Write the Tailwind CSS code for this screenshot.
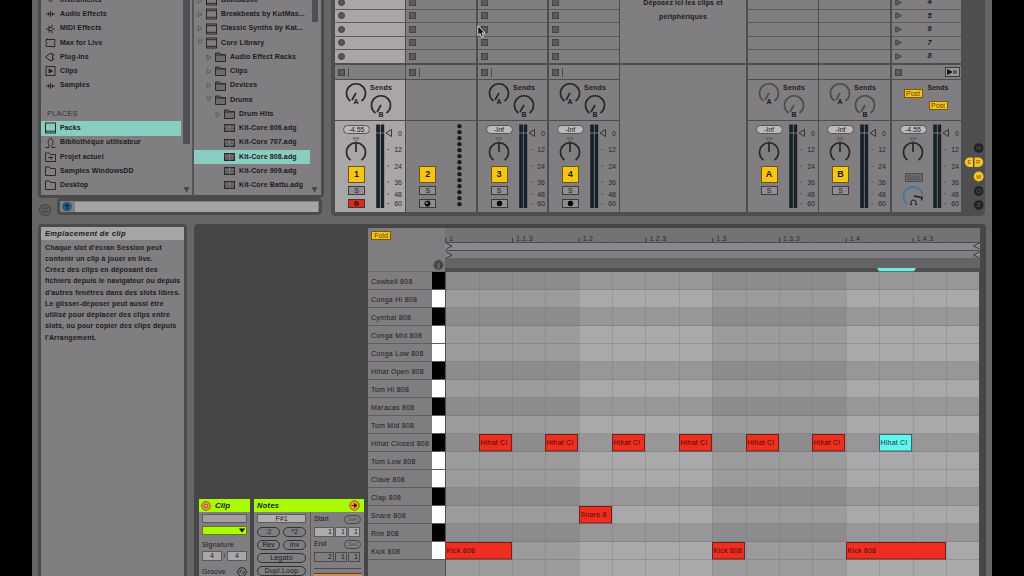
<!DOCTYPE html>
<html lang="fr">
<head>
    <meta charset="UTF-8">
    <meta name="viewport" content="width=device-width, initial-scale=1.0">
    <title>Session - Kit-Core 808</title>
    <script src="https://cdn.jsdelivr.net/npm/@tailwindcss/browser@4"></script>
    <style>
        body { font-family: 'Liberation Sans', Arial, sans-serif; }
        svg text { font-family: 'Liberation Sans', Arial, sans-serif; }
    </style>
</head>
<body class="bg-black w-[1024px] h-[576px] overflow-hidden">
    <div class="ml-8 w-[960px] h-[576px] bg-[#676667] overflow-hidden text-[#1c1a1c]">
        <div class="flex h-[224px]">
            <!-- Navigateur -->
            <div class="w-[299px] shrink-0 pl-1.5">
                <div class="w-[286px] h-[198px] bg-[#807e81] border-x-[3px] border-b-[3px] border-[#4c4b4c] rounded-b-sm flex overflow-hidden">
                    <div id="categories" class="w-[142px] h-[198px] -mt-[7px] shrink-0"></div>
                    <div class="w-[7px] h-[195px] shrink-0 flex flex-col items-center justify-between">
                        <div class="w-[7px] h-[144px] bg-[#4f4e54]"></div>
                        <svg class="w-[7px] h-[9px]" viewBox="0 0 7 9"><path d="M0.5 1h6L3.5 7z" fill="#4a494b"/></svg>
                    </div>
                    <div class="w-0.5 ml-0.5 h-[195px] bg-[#555456] shrink-0"></div>
                    <div id="files" class="w-[116px] h-[210px] -mt-[7px] shrink-0"></div>
                    <div class="w-[9px] h-[195px] shrink-0 flex flex-col items-center justify-between">
                        <div class="w-[6px] h-[22px] bg-[#4f4e54]"></div>
                        <svg class="w-[7px] h-[9px]" viewBox="0 0 7 9"><path d="M0.5 1h6L3.5 7z" fill="#4a494b"/></svg>
                    </div>
                </div>
                <div class="flex items-start">
                    <svg class="w-[18px] h-[20px] shrink-0" viewBox="0 0 18 20"><circle cx="7" cy="12" r="6.300" fill="#4d4c4d"/><circle cx="7" cy="12" r="4" fill="none" stroke="#6c6b6c"/><path d="M4 12h6" stroke="#6c6b6c"/></svg>
                    <div class="ml-px w-[265px] h-[17px] rounded-sm bg-[#807e81] border-[3px] border-[#4c4b4c] flex items-center">
                        <svg class="w-[13px] h-[11px] shrink-0" viewBox="0 0 13 11"><circle cx="7" cy="5.500" r="4.800" fill="#1e5d84"/><path d="M7 8.500V3M4.800 4.500h4.400" stroke="#0c2c44" stroke-width="1.300"/></svg>
                        <div class="ml-0.5 w-[243px] h-2.5 bg-[#a5a3a5]"></div>
                    </div>
                </div>
            </div>
            <!-- Session -->
            <div class="w-[654px] h-[216px] bg-[#4e4d4f] rounded-b pl-1 flex">
                <div id="tracks" class="flex h-[212px] shrink-0"></div>
                <svg class="w-[23px] h-[216px] shrink-0" viewBox="1 0 23 216">
                    <g fill="#222123"><circle cx="17.700" cy="148" r="4.800"/><circle cx="17.700" cy="191" r="4.800"/><circle cx="17.700" cy="205" r="4.800"/></g>
                    <g fill="none" stroke="#4b4a4c" stroke-width=".9"><path d="M16 150v-4M19 150v-4M16 148h3"/><circle cx="17.700" cy="191" r="2"/><path d="M16 203.500h3.400M16 205h3.400M16 206.500h3.400"/></g>
                    <g fill="#f4c81c"><path d="M12 157.500H8.500a4.700 4.700 0 0 0 0 9.400H12zM13.500 157.500h4a4.700 4.700 0 0 1 0 9.400h-4z"/><circle cx="17.700" cy="176.500" r="4.900"/></g>
                    <g fill="#a8681c" font-size="5.500" font-weight="bold"><text x="6.500" y="164.200">E</text><text x="15" y="164.200">R</text><text x="15.300" y="178.500">M</text></g>
                </svg>
            </div>
        </div>

        <div class="flex h-[352px]">
            <!-- Vue d'info -->
            <div class="ml-1.5 w-[149px] h-[352px] shrink-0 bg-[#4c4b4c] rounded-t pt-[3px] px-[3px]">
                <div class="h-[349px] bg-[#807e81]">
                    <div class="h-[13px] bg-[#a6a5a6] pl-1 text-[7.5px] leading-[13px] font-bold italic tracking-[0.330px] whitespace-nowrap">Emplacement de clip</div>
                    <p class="pl-1 pt-[1.500px] text-[7px] leading-[11.250px] font-bold tracking-[0.150px] whitespace-nowrap">Chaque slot d'écran Session peut<br>contenir un clip à jouer en live.<br>Créez des clips en déposant des<br>fichiers depuis le navigateur ou depuis<br>d'autres fenêtres dans des slots libres.<br>Le glisser-déposer peut aussi être<br>utilisé pour déplacer des clips entre<br>slots, ou pour copier des clips depuis<br>l'Arrangement.</p>
                </div>
            </div>
            <!-- Vue du clip -->
            <div class="ml-[7px] w-[792px] h-[352px] shrink-0 bg-[#474647] rounded-t flex">
                <div class="w-[174px] shrink-0 pl-[5px] pt-[275px] flex gap-[4px] text-[7px]">
                    <div class="w-[51px] bg-[#807e81]">
                        <div class="h-[13px] bg-[#a9fb02] flex items-center gap-1 pl-0.5 text-[8px] font-bold italic">
                            <svg class="w-[10px] h-[10px]" viewBox="0 0 10 10"><circle cx="5" cy="5" r="4.300" fill="#d8a950" stroke="#a5571e"/><circle cx="5" cy="5" r="1.900" fill="none" stroke="#a5571e"/></svg>Clip
                        </div>
                        <div class="mx-[3px] mt-[2px] h-[9px] bg-[#a19fa2] border border-[#5c5a5d]"></div>
                        <div class="mx-[3px] mt-[3px] h-[9px] bg-[#a9fb02] border border-[#5d7b18] flex items-center justify-end pr-px"><svg class="w-[6px] h-[5px]" viewBox="0 0 6 5"><path d="M0 .5h6L3 4.500z"/></svg></div>
                        <div class="pl-[3px] mt-[4px] leading-[11px] tracking-[0.200px]">Signature</div>
                        <div class="flex mx-[3px] mt-px items-center justify-between text-center leading-[8px]">
                            <span class="w-[20px] h-[10px] bg-[#a8a6a9] border border-[#5c5a5d]">4</span><span>/</span><span class="w-[20px] h-[10px] bg-[#a8a6a9] border border-[#5c5a5d]">4</span>
                        </div>
                        <div class="pl-[3px] pr-[3px] mt-[6px] flex items-center justify-between leading-[10px] tracking-[0.150px]">Groove<svg class="w-[10px] h-[10px]" viewBox="0 0 10 10" fill="none" stroke="#262427"><circle cx="5" cy="5" r="4.300"/><path d="M3 6V4l2-1M7 4v2L5 7"/></svg></div>
                    </div>
                    <div class="w-[110px] bg-[#807e81]">
                        <div class="h-[13px] bg-[#a9fb02] flex items-center justify-between pl-[3px] pr-1 text-[7.500px] tracking-[0.300px] font-bold italic">Notes<svg class="w-[11px] h-[11px]" viewBox="0 0 11 11"><circle cx="5.500" cy="5.500" r="4.700" fill="#f0a62c" stroke="#9c4a14"/><path d="M2.500 5.500h5M5.500 3.500l2.500 2-2.500 2z" fill="#301c08" stroke="#301c08"/></svg></div>
                        <div class="flex h-[64px]">
                            <div class="w-[56px] pl-[3px] pr-1 pt-[2px] text-center leading-[8px]">
                                <div class="h-[9px] bg-[#b0aeb1] border border-[#5c5a5d] leading-[7px]">F#1</div>
                                <div class="flex justify-between mt-[4px]"><span class="w-[23px] h-[10px] rounded-full border border-[#343235]">:2</span><span class="w-[23px] h-[10px] rounded-full border border-[#343235]">*2</span></div>
                                <div class="flex justify-between mt-[3px]"><span class="w-[23px] h-[10px] rounded-full border border-[#343235]">Rev</span><span class="w-[23px] h-[10px] rounded-full border border-[#343235]">Inv</span></div>
                                <div class="h-[10px] mt-[3px] rounded-full border border-[#343235] tracking-[0.200px]">Legato</div>
                                <div class="h-[10px] mt-[3px] rounded-full border border-[#343235] tracking-[0.200px]">Dupl.Loop</div>
                            </div>
                            <div class="flex-1 border-l border-[#5c5a5d] pl-[3px] pr-[3px] pt-[2px] leading-[8px]">
                                <div class="flex justify-between items-center h-[10px]">Start<span class="w-[17px] h-[9px] rounded-full border border-[#4a484b] text-[#555356] text-[6px] leading-[7px] text-center">Set</span></div>
                                <div class="flex gap-px mt-[3px] text-right"><span class="w-[20px] h-[10px] bg-[#adabae] border border-[#5c5a5d] pr-px">1</span><span class="w-[12px] h-[10px] bg-[#adabae] border border-[#5c5a5d] pr-px">1</span><span class="w-[12px] h-[10px] bg-[#adabae] border border-[#5c5a5d] pr-px">1</span></div>
                                <div class="flex justify-between items-center h-[10px] mt-[2px]">End<span class="w-[17px] h-[9px] rounded-full border border-[#4a484b] text-[#555356] text-[6px] leading-[7px] text-center">Set</span></div>
                                <div class="flex gap-px mt-[3px] text-right"><span class="w-[20px] h-[10px] border border-[#4c4a4d] pr-px">2</span><span class="w-[12px] h-[10px] border border-[#4c4a4d] pr-px">1</span><span class="w-[12px] h-[10px] border border-[#4c4a4d] pr-px">1</span></div>
                                <div class="h-px bg-[#4c4a4d] mt-[6px]"></div>
                                <div class="h-1 bg-[#c98f58] border-t border-[#5a3f28] mt-[4px] -mr-px"></div>
                            </div>
                        </div>
                    </div>
                </div>
                <!-- Éditeur de notes MIDI -->
                <div class="w-[612px] mt-1 h-[348px]">
                    <div class="flex h-[44px]">
                        <div class="w-[77px] bg-[#7f7d80] border-b border-[#6a686b] pt-[3px] pl-[3px] flex justify-between">
                            <span class="w-[20px] h-[9px] bg-[#f4c41c] border border-[#7a5a08] text-[#5e4404] text-[7px] leading-[7px] text-center">Fold</span>
                            <svg class="w-[14px] h-[12px] mt-[28px]" viewBox="0 0 14 12" fill="none" stroke="#2c2a2d"><circle cx="7.500" cy="6" r="4.700" fill="#5f5d60" stroke="#4b494c"/><path d="M5 8.500V5.500a2.500 2.500 0 0 1 5 0v3M5.500 6.500v2M9.500 6.500v2"/></svg>
                        </div>
                        <svg id="ruler" class="w-[535px] h-[44px]" viewBox="445 228 535 44"></svg>
                    </div>
                    <div class="flex h-[304px]">
                        <div id="keys" class="w-[77px] bg-[#7f7d80] shrink-0"></div>
                        <svg id="grid" class="w-[535px] h-[304px]" viewBox="445 272 535 304"></svg>
                    </div>
                </div>
            </div>
        </div>
    </div>
    <!-- Curseur -->
    <svg class="absolute left-[477px] top-[25px] w-[9px] h-[14px]" viewBox="0 0 9 14"><path d="M.8.8v9.700l2.300-2 1.500 3.800 1.900-.8-1.500-3.600h3z" fill="#111" stroke="#e8e6e8" stroke-width=".9"/></svg>

    <script>
        // Icônes du navigateur (13 x 12)
        const icons = {
            inst: '<path d="M3 0v4l3.500 4L10 4V0"/>',
            wave: '<path d="M2 6h9M4.500 4.500v3M6.500 3v6M8.500 4.500v3"/>',
            midi: '<path d="M2 6h3M8 6h3M5 2.500v7M8 1.500v3H5M8 7.500v3M5 7.500h3"/>',
            max: '<path d="M2 2.500h9v2L10 6l1 1.500v2H2v-2L3 6 2 4.500zM3.500 2.500v-1M9.500 9.500v1"/>',
            plug: '<path d="M1.500 6L6 2.500h2.500v7H6zM8.500 4h2M8.500 8h2"/>',
            clip: '<rect x="2" y="1.500" width="9" height="9"/><path d="M5 4l3.500 2L5 8z" fill="#1c1a1c"/>',
            pack: '<rect x="1.500" y="1" width="10" height="10"/><path d="M1.500 9.200h10"/>',
            user: '<path d="M1.500 10.500H5V8C3.500 6.500 4 1.500 6.500 1.500S9.500 6.500 8 8v2.500h3.500"/>',
            proj: '<path d="M1.500 10.500V2h4l1 1.500h5v7zM4 6.500h5M7 5v3.500"/>',
            dir: '<path d="M1.500 10.500V2h4l1 1.500h5v7z"/>',
            lib: '<rect x="1.500" y="1" width="10" height="10"/><path d="M1.500 2.700h10M1.500 9.300h10"/>',
            folder: '<path d="M1.500 10.500V2h4l1 1.500h5v7zM1.500 4h10" fill="#6d6b6e"/>',
            adg: '<rect x="1.500" y="2.500" width="10" height="7" fill="#5a585b"/><path d="M1.500 5h10M6.500 2.500v7M3 7.500h2M8 7.500h2" stroke="#8b898c" stroke-width=".7"/>',
        };
        const icon = name => `<svg class="w-[13px] h-[12px] shrink-0" viewBox="0 0 13 12" fill="none" stroke="#2a282b">${icons[name] || ''}</svg>`;

        const categories = [
            ['inst', 'Instruments'], ['wave', 'Audio Effects'], ['midi', 'MIDI Effects'], ['max', 'Max for Live'],
            ['plug', 'Plug-ins'], ['clip', 'Clips'], ['wave', 'Samples'], null, ['', 'PLACES'], ['pack', 'Packs'],
            ['user', 'Bibliothèque utilisateur'], ['proj', 'Projet actuel'], ['dir', 'Samples WindowsDD'], ['dir', 'Desktop'], ['dir', ''],
        ];
        document.getElementById('categories').innerHTML = categories.map(c => {
            if (!c) return '<div class="h-[14.250px]"></div>';
            if (c[1] === 'PLACES') return '<div class="h-[14.250px] pl-1.5 text-[7.500px] leading-[14px] tracking-[0.200px] text-[#343235]">PLACES</div>';
            const bg = c[1] === 'Packs' ? 'bg-[#88cdc0] w-[140px]' : '';
            return `<div class="h-[14.250px] flex items-center pl-[3px] gap-[3px] text-[7px] font-bold tracking-[0.130px] whitespace-nowrap ${bg}">${icon(c[0])}<span>${c[1]}</span></div>`;
        }).join('');

        // [retrait, flèche, icône, nom]
        const files = [
            [3, 'r', 'lib', 'Bombastic'], [3, 'r', 'lib', 'Breakbeats by KutMas...'], [3, 'r', 'lib', 'Classic Synths by Kat...'],
            [3, 'd', 'lib', 'Core Library'], [12, 'r', 'folder', 'Audio Effect Racks'], [12, 'r', 'folder', 'Clips'],
            [12, 'r', 'folder', 'Devices'], [12, 'd', 'folder', 'Drums'], [21, 'r', 'folder', 'Drum Hits'],
            [21, '', 'adg', 'Kit-Core 606.adg'], [21, '', 'adg', 'Kit-Core 707.adg'], [21, '', 'adg', 'Kit-Core 808.adg'],
            [21, '', 'adg', 'Kit-Core 909.adg'], [21, '', 'adg', 'Kit-Core Battu.adg'], [21, '', 'adg', ''],
        ];
        const arrows = { r: '<path d="M1 1l4 2.500L1 6z"/>', d: '<path d="M.5 1h5L3 5z"/>' };
        document.getElementById('files').innerHTML = files.map(([pad, arrow, ic, name]) => {
            const bg = name.includes('808') ? 'bg-[#88cdc0]' : '';
            return `<div class="h-[14.250px] flex items-center text-[7px] font-bold tracking-[0.130px] whitespace-nowrap ${bg}" style="padding-left:${pad}px">
                <svg class="w-[6px] h-[7px] mr-[2px] shrink-0" viewBox="0 0 6 7" fill="none" stroke="#555356" stroke-width=".8">${arrows[arrow] || ''}</svg>${icon(ic)}<span class="ml-[3px]">${name}</span></div>`;
        }).join('');

        // Potentiomètre ouvert en bas
        const knob = (x, y, color, dx, dy) => `<path d="M${x - 5.5} ${y + 8}A9.500 9.500 0 1 1 ${x + 5.5} ${y + 8}M${x} ${y}L${x + dx} ${y + dy}" fill="none" stroke="${color}" stroke-width="1.700"/>`;

        const sends = t => {
            if (t.type === 'midi') return '';
            if (t.type === 'master') return `<div class="h-full flex flex-col pt-1 text-[7px] leading-[8px] font-bold">
                <div class="flex"><span class="ml-[12px] mt-[5px] w-[19px] h-[9px] bg-[#f4c41c] border border-[#7a5a08] text-[#5e4404] font-normal leading-[7px] text-center">Post</span><span class="ml-[5px]">Sends</span></div>
                <span class="ml-[37px] mt-[3px] w-[19px] h-[9px] bg-[#f4c41c] border border-[#7a5a08] text-[#5e4404] font-normal leading-[7px] text-center">Post</span></div>`;
            const c = t.type === 'return' ? '#4d4b4e' : '#2a282b';
            return `<svg class="w-[70px] h-[40px]" viewBox="0 80 70 40" fill="#1c1a1c">${knob(21, 93, c, -4, 7)}${knob(46, 105, c, -4, 7)}
                <text x="35" y="90" font-size="7" font-weight="bold" textLength="22">Sends</text>
                <text x="18.500" y="104" font-size="7" font-weight="bold">A</text><text x="43.500" y="117" font-size="7" font-weight="bold">B</text></svg>`;
        };

        const marks = [[0, 133], [12, 149.5], [24, 166], [36, 182], [48, 194], [60, 203.5]];
        const meter = t => {
            if (t.type === 'midi') return `<svg class="w-[28px] h-[91px]" viewBox="42 121 28 91" fill="#1c1a1c">${Array.from({ length: 14 }, (_, i) => `<circle cx="53.500" cy="${126 + i * 6.02}" r="2.200"/>`).join('')}</svg>`;
            return `<svg class="w-[28px] h-[91px]" viewBox="41 121 28 91" fill="#2a282b" font-size="7">
                <path d="M41.200 124.500h3.700v83.500h-3.700zM45.700 124.500h3.500v83.500h-3.500z" fill="#18212a"/><path d="M41 133h11" stroke="#8d8b8e" stroke-width=".8"/>
                <path d="M56.500 129.500v7L51 133z" fill="none" stroke="#343235"/>
                ${marks.map(([v, y]) => `<text x="67" y="${y + 2.5}" text-anchor="end">${v}</text>${v ? `<path d="M52 ${y}h2.500" stroke="#555356" stroke-width=".8"/>` : ''}`).join('')}</svg>`;
        };

        const strip = t => {
            const btn = `<div class="ml-[13px] mt-[3px] w-[17px] h-[17px] bg-[#f9c513] border border-[#6c5610] text-[9px] leading-[15px] font-bold text-center">${t.name}</div>
                <div class="ml-[13px] mt-[3px] w-[17px] h-[9px] bg-[#918f92] border border-[#3c3a3d] text-[7px] leading-[7px] text-center">S</div>`;
            const arm = { audio: '<circle cx="7.500" cy="3.500" r="2.700"/>', midi: '<path d="M7.500 1a2.500 2.500 0 1 0 0 5.200a2.500 2.500 0 0 0 0-5.200M8 2l1.500-1" stroke="#1c1a1c"/><circle cx="6.800" cy="3" r="1" fill="#aaa"/>', armed: '<circle cx="7.500" cy="3.500" r="2.500" fill="#5c0f08"/><path d="M6.500 4.500l2-2" stroke="#c33" stroke-width=".7"/>' }[t.type];
            const armBg = t.type === 'armed' ? 'bg-[#dd2b18]' : 'bg-[#8f8d90]';
            const armBtn = arm ? `<div class="ml-[13px] mt-1 w-[17px] h-[9px] border border-[#3c3a3d] ${armBg}"><svg class="w-[15px] h-[7px] block" viewBox="0 0 15 7">${arm}</svg></div>` : '';
            if (t.type === 'midi') return `<div class="w-[42px] pt-[42px]">${btn}${armBtn}</div>`;
            const top = `<div class="ml-[8px] mt-[4px] w-[27px] h-[9px] rounded-full bg-[#bbb9bb] border border-[#555356] text-[7px] leading-[7px] text-center">${t.vol}</div>
                <svg class="w-[42px] h-[29px] block" viewBox="0 134 42 29">${knob(21, 152, '#2a282b', 0, -9)}<path d="M18 138h6l-3 3.500z" fill="none" stroke="#4d4b4e" stroke-width=".8"/></svg>`;
            if (t.type === 'master') return `<div class="w-[41px]">${top}<div class="ml-[13px] mt-[10px] w-[18px] h-[9px] bg-[#6d6b6e] border border-[#4d4b4e] text-[#4a484b] text-[6.500px] leading-[7px] text-center">Solo</div>
                <svg class="w-[42px] h-[27px] block" viewBox="0 182 42 27"><path d="M15 203.500A9.500 9.500 0 1 1 30.500 197" fill="none" stroke="#43779b" stroke-width="1.700"/><path d="M22 196l8 1.500-.5 3" fill="none" stroke="#1c1a1c" stroke-width="1.500"/><path d="M19 204.500v-2a2.500 2.500 0 0 1 5 0v2M18 204.500h2M23 204.500h2" fill="none" stroke="#1c1a1c"/></svg></div>`;
            return `<div class="w-[41px]">${top}${btn}${armBtn}</div>`;
        };

        const slot = (t, i) => {
            if (t.type === 'return') return '';
            if (t.type === 'armed') return '<svg class="w-[7px] h-[7px]" viewBox="0 0 7 7"><circle cx="3.500" cy="3.500" r="3" fill="#5a575a" stroke="#403e41"/></svg>';
            if (t.type === 'master') return `<svg class="w-[7px] h-[7px]" viewBox="0 0 7 7"><path d="M.8.8l5.500 2.700L.8 6.200z" fill="#6a686b" stroke="#3c3a3d"/></svg><span class="ml-[26px] text-[7.500px] leading-[8px] font-bold italic">${i + 4}</span>`;
            return '<div class="w-[7px] h-[7px] bg-[#5c5a5d] border border-[#454346]"></div>';
        };
        const stop = t => {
            if (t.type === 'return') return '';
            if (t.type === 'master') return '<div class="w-[7px] h-[7px] bg-[#5c5a5d] border border-[#454346]"></div><svg class="w-[15px] h-[10px] ml-auto mr-[1px]" viewBox="0 0 15 10"><rect x=".5" y=".5" width="14" height="9" fill="#979598" stroke="#3c3a3d"/><path d="M2.500 2.500L7 5 2.500 7.500zM8 4h4M8 6h4" fill="#111" stroke="#111" stroke-width=".8"/></svg>';
            return '<div class="w-[7px] h-[7px] bg-[#5c5a5d] border border-[#454346]"></div><div class="ml-[3px] w-px h-[9px] bg-[#4d4b4e]"></div>';
        };

        const tracks = [
            { name: '1', type: 'armed', vol: '-4.55', w: 71.25 }, { name: '2', type: 'midi', w: 71.25 },
            { name: '3', type: 'audio', vol: '-Inf', w: 71.25 }, { name: '4', type: 'audio', vol: '-Inf', w: 71.25 },
            { type: 'drop', w: 127.5 }, { name: 'A', type: 'return', vol: '-Inf', w: 71.5 },
            { name: 'B', type: 'return', vol: '-Inf', w: 72.5 }, { type: 'master', vol: '-4.55', w: 70.5 },
        ];
        document.getElementById('tracks').innerHTML = tracks.map(t => {
            if (t.type === 'drop') return `<div class="pr-[1.500px] flex flex-col shrink-0" style="width:${t.w}px">
                <div class="h-[63px] bg-[#807e81] text-[7px] leading-[13.500px] font-bold text-center tracking-[0.130px]"><p class="-mt-1">Déposez ici les clips et<br>périphériques</p></div>
                <div class="mt-[2px] flex-1 bg-[#807e81]"></div></div>`;
            const bg = t.type === 'armed' ? 'bg-[#aaa5a7]' : 'bg-[#807e81]';
            return `<div class="pr-[1.500px] flex flex-col shrink-0" style="width:${t.w}px">
                <div class="h-[63px] overflow-hidden ${bg}"><div class="-mt-[4px]">${[0, 1, 2, 3, 4].map(i => `<div class="h-[13.500px] border-b border-[#5c5a5d] flex items-center pl-[3px]">${slot(t, i)}</div>`).join('')}</div></div>
                <div class="mt-[2px] h-[14px] bg-[#807e81] flex items-center pl-[3px]">${stop(t)}</div>
                <div class="mt-px h-[40px] overflow-hidden ${bg}">${sends(t)}</div>
                <div class="mt-px h-[91px] flex overflow-hidden ${bg}">${strip(t)}${meter(t)}</div></div>`;
        }).join('');

        // Règle temporelle
        const X0 = 445.2, STEP = 33.38;
        const labels = ['1', '1.1.3', '1.2', '1.2.3', '1.3', '1.3.3', '1.4', '1.4.3'];
        document.getElementById('ruler').innerHTML = `
            <path d="M445 228h535v15h-535z" fill="#747374"/><path d="M445 243h535v7h-535z" fill="#8b888d"/><path d="M445 251h535v7h-535z" fill="#817f83"/>
            <path d="M445 258h535v10h-535z" fill="#656465"/><path d="M445 268h535v4h-535z" fill="#4f4e4f"/>
            <path d="M445 242.500h535M445 250.500h535" stroke="#4e4b54"/>
            ${labels.map((l, i) => `<path d="M${X0 + i * STEP * 2 + .5} 238v4.500" stroke="#3a383b"/><path d="M${X0 + i * STEP * 2 + STEP} 240.500v2" stroke="#5c5a5d"/><text x="${X0 + i * STEP * 2 + 4}" y="240.500" font-size="7" letter-spacing=".25" fill="#2a282b">${l}</text>`).join('')}
            <path d="M446 243l6 3-6 3M446 252l6 3-6 3M979.500 243l-6 3 6 3M979.500 252l-6 3 6 3" fill="#8b888d" stroke="#353336" stroke-width=".9"/>
            <path d="M877 268h39l-2 3.300h-35z" fill="#6fe9e0"/>`;

        const pads = [
            ['Cowbell 808', 1], ['Conga Hi 808', 0], ['Cymbal 808', 1], ['Conga Mid 808', 0], ['Conga Low 808', 0], ['Hihat Open 808', 1],
            ['Tom Hi 808', 0], ['Maracas 808', 1], ['Tom Mid 808', 0], ['Hihat Closed 808', 1], ['Tom Low 808', 0], ['Clave 808', 0],
            ['Clap 808', 1], ['Snare 808', 0], ['Rim 808', 1], ['Kick 808', 0],
        ];
        document.getElementById('keys').innerHTML = pads.map(([name, black]) => `
            <div class="h-[18px] flex border-b border-[#5f5d60] text-[7px] leading-[19px] tracking-[0.280px] whitespace-nowrap">
                <span class="w-[64px] pl-[3px]">${name}</span><span class="w-[13px] h-[17px] ${black ? 'bg-black' : 'bg-white'}"></span>
            </div>`).join('');

        // Grille : lignes, temps forts, puis notes
        const notes = [
            ...[1, 3, 5, 7, 9, 11].map(s => [9, s, 1, 'Hihat Cl']), [9, 13, 1, 'Hihat Cl', true],
            [13, 4, 1, 'Snare 8'], [15, 0, 2, 'Kick 808'], [15, 8, 1, 'Kick 808'], [15, 12, 3, 'Kick 808'],
        ];
        let grid = '<rect x="445" y="272" width="535" height="304" fill="#a9a8aa"/>';
        pads.forEach(([, black], i) => {
            if (black) grid += `<rect x="445" y="${272 + i * 18}" width="535" height="18" fill="#989698"/>`;
            grid += `<path d="M445 ${289.5 + i * 18}h535" stroke="#6c6a6d" stroke-opacity=".35"/>`;
        });
        [0, 8].forEach(s => grid += `<rect x="${Math.round(X0 + s * STEP)}" y="272" width="${Math.round(STEP * 4)}" height="304" fill="#5a585c" fill-opacity=".16"/>`);
        for (let s = 1; s < 16; s++) grid += `<path d="M${Math.round(X0 + s * STEP) + .5} 272v304" stroke="#6c6a6d" stroke-opacity=".25"/>`;
        notes.forEach(([row, s, len, name, selected]) => {
            const x = Math.round(X0 + s * STEP), y = 272 + row * 18;
            grid += `<rect x="${x + .5}" y="${y + .5}" width="${Math.round(len * STEP) - 1}" height="16.500" fill="${selected ? '#62f5ee' : '#ee2f1f'}" stroke="${selected ? '#3b6668' : '#6e201a'}"/>
                <text x="${x + 1.5}" y="${y + 11.3}" font-size="7" letter-spacing=".22" fill="${selected ? '#123638' : '#4a0b07'}">${name}</text>`;
        });
        document.getElementById('grid').innerHTML = grid + '<path d="M445.500 272v304M979.500 272v304" stroke="#4d4b4e"/>';
    </script>
</body>
</html>
